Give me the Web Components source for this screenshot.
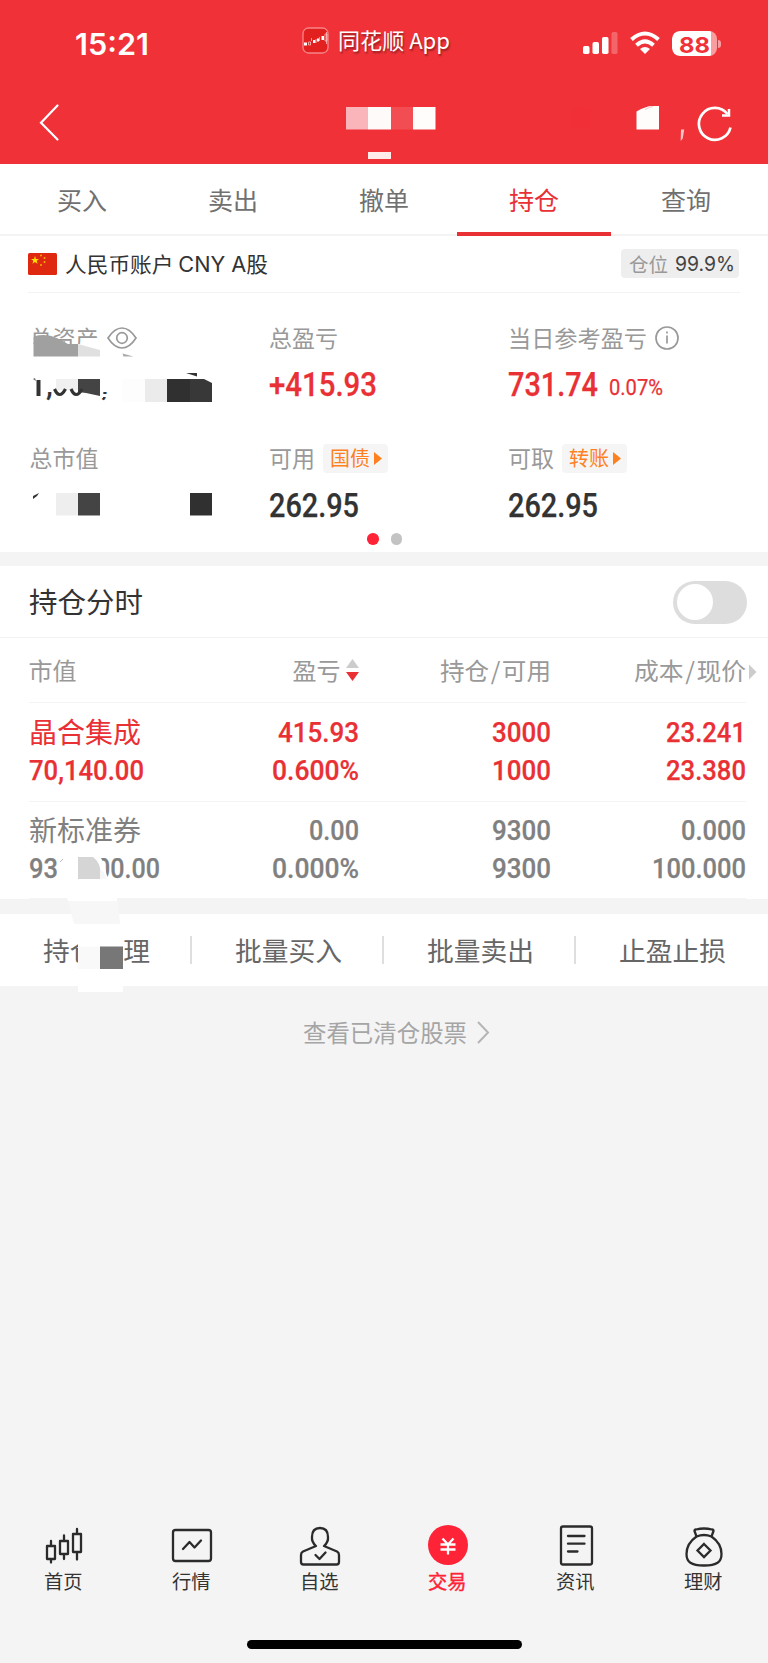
<!DOCTYPE html>
<html lang="zh-CN">
<head>
<meta charset="utf-8">
<title>持仓</title>
<style>
body{margin:0;background:#f4f4f4;font-family:"Noto Sans CJK SC",sans-serif}
</style>
</head>
<body>
<trade-page></trade-page>
<script>
const define=(name,css,html)=>customElements.define(name,class extends HTMLElement{
  constructor(){super();this.attachShadow({mode:'open'}).innerHTML=`<style>:host{display:block;box-sizing:border-box}*{box-sizing:border-box}svg{display:block;overflow:visible}${css}</style>${html}`;}
});

/* Single line of text condensed or stretched to a given width. */
customElements.define('fit-text',class extends HTMLElement{
  constructor(){super();this.attachShadow({mode:'open'}).innerHTML=`<style>
  :host{display:block;flex:none;white-space:nowrap;height:1.2em;line-height:1.2em}
  span{display:inline-block;transform-origin:0 50%;position:relative;top:var(--dy,-.01em)}
  :host([num]) span{font-family:Roboto,sans-serif;top:-.075em;-webkit-text-stroke:.25px currentColor}
  :host([latin]) span{font-family:Inter,sans-serif;top:-.03em}
  </style><span><slot></slot></span>`;}
  connectedCallback(){
    const s=this.shadowRoot.querySelector('span'),w=+this.getAttribute('w');
    this.style.fontSize=this.getAttribute('size')+'px';
    this.style.width=w+'px';
    s.style.transform=`scaleX(${w/s.getBoundingClientRect().width})`;
  }
});

define('status-bar',`:host{height:82px;display:flex;align-items:center;color:#fff;padding-left:75px}
 .time{font-weight:600;margin-top:4px}
 .app{display:flex;align-items:center;margin-left:153px;gap:9px;margin-top:-2px;--dy:-.05em;text-shadow:1px 2px 2px #0006}
 .sig{margin-left:133px;display:flex;gap:12px;margin-top:5px}
 .bat{width:50px;height:25px;display:flex;align-items:center;background:linear-gradient(90deg,#fff 39.5px,#f99da0 39.5px) 0 0/45px 25px no-repeat;border-radius:7px;padding-left:7px;color:#f03238;font-weight:700;clip-path:inset(0 5px 0 0 round 8px)}
 .wrap{display:flex;align-items:center}.nub{width:3px;height:8px;background:#f99da0;border-radius:0 3px 3px 0;margin-left:-4px}`,
 `<fit-text class="time" latin w="74" size="30">15:21</fit-text>
 <div class="app"><svg width="27" height="27" viewBox="0 0 27 27"><rect x="1" y="1" width="25" height="25" rx="5.5" fill="#e2201f" stroke="#f78488" stroke-width="1.3"/><path d="M2 15.500h3v3H2zM11 13h2.500v3H11zM15 11.500h2v3H15zM19.500 9h2.500v4H19.500z" fill="#fff"/><path d="M6.500 15h2v3h-2zM9.500 11v3M14 12v4M17.500 10v4M24.500 5v12M23 7h2v7h-2z" fill="none" stroke="#fbc0c0" stroke-width=".8"/></svg>
 <fit-text w="112" size="22">同花顺 App</fit-text></div>
 <div class="sig"><svg width="35" height="24" viewBox="0 0 35 24" fill="#fff"><rect y="15" width="6.500" height="8" rx="1.700"/><rect x="9.500" y="11" width="6.500" height="12" rx="1.700"/><rect x="19" y="6" width="6.500" height="17" rx="1.700"/><rect x="28.500" y="1" width="6" height="22" rx="1.700" opacity=".25"/></svg>
 <svg width="30" height="24" viewBox="0 0 30 24"><path d="M1.500 8.500Q15-3.500 28.500 8.500M6.500 14.300Q15 6.500 23.500 14.300" fill="none" stroke="#fff" stroke-width="4"/><path d="M10 18Q15 14 20 18L15 23z" fill="#fff"/></svg>
 <div class="wrap"><div class="bat"><fit-text latin w="31" size="22">88</fit-text></div><div class="nub"></div></div></div>`);

define('nav-header',`:host{height:81.500px;position:relative;display:flex;align-items:center;justify-content:space-between;padding:0 36px 0 39px}svg.mask{position:absolute;left:0;top:-82px}`,
 `<svg width="20" height="37" viewBox="0 0 20 37"><path d="M18.500 1.500L2 18.800l16.500 16.700" fill="none" stroke="#fff" stroke-width="2.200" stroke-linecap="round"/></svg>
 <svg width="36" height="36" viewBox="0 0 36 36" fill="none" stroke="#fff" stroke-width="2.700"><path d="M34.500 22.500A16 16 0 1 1 31.500 9"/><path d="M26 10.500h7V4" stroke-width="2.500"/></svg>
 <svg class="mask" width="768" height="164"><path fill="#f9b5b9" d="M346 107h22v22.500h-22z"/><path fill="#fffafa" d="M368 107h23v22.500h-23z"/><path fill="#f34d54" d="M391 107h22v22.500h-22z"/><path fill="#fffcfc" d="M413 107h22.500v22.500H413zM636.500 111.500Q646 106 652 106H659v23.500H636.500z"/><path fill="#ffebea" d="M368 152h23v7h-23z"/><path fill="#f03036" d="M571 107h20v22h-20z"/><path d="M645 109.500Q650 107 653 106.500" stroke="#fbc5c7" fill="none"/><path fill="#fbc5c7" d="M681 129.500h3.200l-1.500 9-2 2.500z"/></svg>`);

define('trade-tabs',`:host{height:72px;background:#fff;display:flex;padding:0 6.500px;border-bottom:2px solid #f3f3f3;color:#707070}
 div{width:151px;height:72px;display:flex;align-items:center;justify-content:center;padding-right:1px}.on{color:#e93034;width:154px;margin:0 -.500px 0 -2.500px;border-bottom:4.500px solid #e93034;padding-top:4.500px}`,
 `<div><fit-text w="50" size="24.5">买入</fit-text></div><div><fit-text w="50" size="24.5">卖出</fit-text></div><div><fit-text w="50" size="24.5">撤单</fit-text></div><div class="on"><fit-text w="50" size="24.5">持仓</fit-text></div><div><fit-text w="50" size="24.5">查询</fit-text></div>`);

define('account-row',`:host{height:57.500px;margin:0 28px;border-bottom:1px solid #f3f3f3;display:flex;align-items:center;color:#333}
 .t{margin-left:8px}.pos{margin-left:auto;width:118px;height:29px;margin-right:1px;border-radius:4px;background:#eee;display:flex;align-items:center;padding-left:7.500px;gap:7px;color:#999}.pos .n{color:#444}`,
 `<svg width="29" height="22" viewBox="0 0 29 22"><rect width="29" height="22" rx="1.500" fill="#de2910"/><path d="M7 3l1 3h3L8.700 7.800l.8 3L7 9 4.500 10.800l.8-3L3 6h3z" fill="#ffde00"/><g fill="#f5b000"><circle cx="13" cy="2.500" r="1"/><circle cx="16.500" cy="5" r="1"/><circle cx="16.500" cy="9" r="1"/><circle cx="13" cy="12" r="1"/></g></svg>
 <fit-text class="t" w="203" size="21">人民币账户 <span style="font-family:Inter">CNY A</span>股</fit-text>
 <div class="pos"><fit-text w="39" size="19.5">仓位</fit-text><fit-text class="n" latin w="60" size="20">99.9%</fit-text></div>`);

define('asset-metric',`.l{height:30px;display:flex;align-items:center;gap:8px;color:#999}.v{height:36px;margin-top:13px;display:flex;align-items:center;gap:11px;color:var(--c,#333);font-weight:500}`,
 `<div class="l"><slot name="label"></slot></div><div class="v"><slot></slot></div>`);

define('link-chip',`:host{width:64.500px;height:28.500px;background:#f5f5f5;border-radius:4px;display:flex;align-items:center;padding-left:7px;gap:3.500px;color:#ff801f}`,
 `<fit-text w="40" size="20"><slot></slot></fit-text><svg width="8" height="13"><path d="M0 0v13L8 6.500z" fill="#ff801f"/></svg>`);

define('asset-panel',`:host{height:258.500px;position:relative;padding:30px 0 0 29.500px}
 .g{display:grid;grid-template-columns:239.500px 239px 1fr;row-gap:41.500px}.red{--c:#e93034}
 .dots{display:flex;gap:12px;margin:10.500px 0 0 337.500px}.dots i{width:11.500px;height:11.500px;border-radius:50%;background:#c3c3c3}.dots i:first-child{background:#ff2337}
 .mask{position:absolute;left:0;top:-293px}`,
 `<div class="g">
 <asset-metric><fit-text slot="label" w="69" size="23">总资产</fit-text><svg slot="label" width="30" height="22" viewBox="0 0 30 22" fill="none" stroke="#999" stroke-width="1.700"><path d="M1 11Q7.500 1 15 1T29 11Q22.500 21 15 21T1 11z"/><circle cx="15" cy="11" r="5.300"/></svg><fit-text num w="78" size="33">1,000,</fit-text></asset-metric>
 <asset-metric class="red"><fit-text slot="label" w="69" size="23">总盈亏</fit-text><fit-text num w="108" size="32.5">+415.93</fit-text></asset-metric>
 <asset-metric class="red"><fit-text slot="label" w="139" size="23">当日参考盈亏</fit-text><svg slot="label" width="24" height="24" viewBox="0 0 24 24" fill="none" stroke="#999" stroke-width="1.700"><circle cx="12" cy="12" r="11"/><path d="M12 9.500v8M12 5.500v2"/></svg><fit-text num w="90" size="32.5">731.74</fit-text><fit-text num w="54" size="21.5" style="font-weight:400;margin-top:7px">0.07%</fit-text></asset-metric>
 <asset-metric><fit-text slot="label" w="69" size="23">总市值</fit-text></asset-metric>
 <asset-metric><fit-text slot="label" w="46" size="23">可用</fit-text><link-chip slot="label">国债</link-chip><fit-text num w="90" size="32.5">262.95</fit-text></asset-metric>
 <asset-metric><fit-text slot="label" w="46" size="23">可取</fit-text><link-chip slot="label">转账</link-chip><fit-text num w="90" size="32.5">262.95</fit-text></asset-metric>
 </div><div class="dots"><i></i><i></i></div>
 <svg class="mask" width="768" height="560"><path fill="#fff" d="M28 336h5.500v8H100v14H28z"/><path fill="#a0a0a0" d="M33.500 336.500Q46 333 57 338L68 344H78v12.500H33.500z"/><path fill="#e0e0e0" d="M78 344l22 6v6.500H78z"/><path fill="#aaa" d="M122.500 353.500l11 3h-10z"/>
 <path fill="#fff" d="M28 366h100v26H46v8H28z"/><path d="M36.500 380h4v16h-4z" fill="#333"/><path fill="#666" d="M33 379l2-1 1 3z"/><path fill="#f0f0f0" d="M56 379h22v11H56z"/><path fill="#fff" d="M53 390h50v8H53z"/><path fill="#444" d="M78 379h22v17l-14-3-8-1z"/><path d="M54.500 389q5 11 11 0M71 389q5 11 11 0" fill="none" stroke="#333" stroke-width="3.200"/>
 <path fill="#fff" d="M101 394h8v3h-8z"/><path fill="#fdfdfd" d="M122 379h23v23h-23z"/><path fill="#ebebeb" d="M145 379h22v23h-22z"/><path fill="#303030" d="M167 379h23v23h-23z"/><path fill="#383838" d="M190 379h14l8 4v19h-22z"/><path fill="#333" d="M186 373h11v3.500zM33 496l6-3-2 3-4 3z"/>
 <path fill="#eee" d="M56 493h22v22.500H56z"/><path fill="#444" d="M78 493h22v22.500H78z"/><path fill="#303030" d="M190 493h22v22.500h-22z"/></svg>`);

define('section-title',`:host{height:72px;border-bottom:1.500px solid #f3f3f3;display:flex;align-items:center;justify-content:space-between;padding:1px 21px 0 29px;color:#333}
 .sw{width:74px;height:43px;border-radius:22px;background:#ddd;padding:3.500px}.sw i{display:block;width:36px;height:36px;border-radius:50%;background:#fff}`,
 `<fit-text w="114" size="28">持仓分时</fit-text><div class="sw"><i></i></div>`);

define('holding-table',`:host{position:relative}
 .r{display:grid;grid-template-columns:150px 180px 192px 1fr;margin:0 22px 0 29px;border-bottom:1px solid #f4f4f4;height:98.500px;align-content:center;justify-items:end;row-gap:4px}
 .r>:nth-child(4n+1){justify-self:start}.h{height:65px;color:#999}.r fit-text{line-height:34px;height:34px}.p,.n{padding-bottom:1px}.p{color:#e93034;font-weight:500;--dy:-.03em}.n{color:#808080;font-weight:500;height:97.500px;--dy:-.03em}
 .p>[w="112"],.n>[w="112"]{font-weight:400}.a{display:flex;align-items:center;gap:5px}.h>*{position:relative;left:-.500px}.r>[w="58"]{margin-right:-.700px}
 .split{display:flex;gap:37.500px}.mask{position:absolute;left:0;top:-638px}.more{position:absolute;right:11px;top:26px}`,
 `<div class="r h"><fit-text w="48" size="24">市值</fit-text><div class="a"><fit-text w="48" size="24">盈亏</fit-text><svg width="13" height="24"><path d="M0 10L6.500 1 13 10z" fill="#ccc"/><path d="M0 14h13l-6.500 9z" fill="#e93034"/></svg></div><fit-text w="111" size="24">持仓&#8202;/&#8202;可用</fit-text><fit-text w="112" size="24">成本&#8202;/&#8202;现价</fit-text></div>
 <svg class="more" width="8" height="16"><path d="M0 .500L7.500 8 0 15.500z" fill="#ccc"/></svg>
 <div class="r p"><fit-text w="112" size="28">晶合集成</fit-text><fit-text num w="81" size="28.5">415.93</fit-text><fit-text num w="59" size="28.5">3000</fit-text><fit-text num w="80" size="28.5">23.241</fit-text>
 <fit-text num w="115" size="28.5">70,140.00</fit-text><fit-text num w="87" size="28.5">0.600%</fit-text><fit-text num w="59" size="28.5">1000</fit-text><fit-text num w="80" size="28.5">23.380</fit-text></div>
 <div class="r n"><fit-text w="112" size="28">新标准券</fit-text><fit-text num w="50" size="28.5">0.00</fit-text><fit-text num w="59" size="28.5">9300</fit-text><fit-text num w="65" size="28.5">0.000</fit-text>
 <div class="split"><fit-text num w="29" size="28.5">93</fit-text><fit-text num w="64" size="28.5">00.00</fit-text></div><fit-text num w="87" size="28.5">0.000%</fit-text><fit-text num w="59" size="28.5">9300</fit-text><fit-text num w="94" size="28.5">100.000</fit-text></div>
 <svg class="mask" width="768" height="1"><path fill="#fff" d="M65 854h31q6 4 8 10l3 12v5H65z"/><path fill="#d5d5d5" d="M78 857h15q6 5 7 11v11H78z"/><path fill="#f7f7f7" d="M100 868q4 4 7 11h-7z"/><path d="M60 862l3-3" stroke="#bbb"/></svg>`);

define('batch-bar',`:host{height:72px;background:#fff;display:flex;align-items:center;position:relative;color:#666;--dy:.02em}
 div{width:192px;height:28px;display:flex;align-items:center;justify-content:center;padding-left:2px;border-right:2px solid #dedede}div:last-of-type{border:0;padding-left:0}.mask{position:absolute;left:0;top:-914.500px}`,
 `<div><fit-text w="107" size="26.5">持仓管理</fit-text></div><div><fit-text w="107" size="26.5">批量买入</fit-text></div><div><fit-text w="107" size="26.5">批量卖出</fit-text></div><div><fit-text w="107" size="26.5">止盈止损</fit-text></div>
 <svg class="mask" width="768" height="1"><path fill="#fff" d="M67 899h50v10H71zM78 936h45v57H78z"/><path fill="#f7f7f7" d="M68 902h50l2 23H74z"/><path fill="#f9f9f9" d="M78 947.500h22v22.500H78z"/><path fill="#777" d="M100 947.500h23V970h-23z"/></svg>`);

define('cleared-link',`:host{height:92px;display:flex;align-items:center;justify-content:center;gap:10px;color:#a5a5a5;padding:2px 0 0 23px;--dy:0}`,
 `<fit-text w="164" size="23.5">查看已清仓股票</fit-text><svg width="12" height="23"><path d="M1 1l10 10.500L1 22" fill="none" stroke="#b5b5b5" stroke-width="2"/></svg>`);

define('tab-item',`:host{width:128px;display:flex;flex-direction:column;align-items:center;color:#333}::slotted(svg){display:block;overflow:visible}fit-text{margin-top:4px;position:relative;left:-.500px}:host([on]){color:#ff2337;-webkit-text-stroke:.4px #ff2337}`,
 `<slot name="icon"></slot><fit-text w="38.5" size="19"><slot></slot></fit-text>`);

define('bottom-tabs',`:host{height:140.500px;margin-top:auto}nav{display:flex;height:117.500px}.home{width:275px;height:9px;border-radius:5px;background:#000;margin:0 auto}tab-item svg{fill:none;stroke:#2b2b2b;stroke-width:2.300;stroke-linejoin:round;stroke-linecap:round}`,
 `<nav>
 <tab-item><svg slot="icon" width="42" height="44" viewBox="43 1522 42 44"><path d="M47 1545h8v13h-8zM51 1540v5M51 1558v3.500M60 1540h8v13h-8zM64 1534.500v5.500M64 1553v5M73 1533h8v18h-8zM77 1528v5M77 1551v7.500"/></svg>首页</tab-item>
 <tab-item><svg slot="icon" width="42" height="44" viewBox="171 1522 42 44"><rect x="173" y="1529" width="38" height="31" rx="2.500"/><path d="M183 1548l6.500-7 5 5.500 6.500-7"/></svg>行情</tab-item>
 <tab-item><svg slot="icon" width="42" height="44" viewBox="299 1522 42 44"><path d="M316 1545Q311.500 1541 312 1536 312 1527 320 1527T328 1536Q328.500 1541 324 1545L337 1550.500Q339 1551.500 339 1554V1561Q339 1563.500 336.500 1563.500H303.500Q301 1563.500 301 1561V1554Q301 1551.500 303 1550.500z"/><path d="M315.500 1554l4 4 6-6.500"/></svg>自选</tab-item>
 <tab-item on><svg slot="icon" width="42" height="44" viewBox="427 1522 42 44"><circle cx="448" cy="1544" r="20" style="fill:#ff2337;stroke:none"/><path style="stroke:#fff;stroke-width:2.300;stroke-linecap:butt" d="M442.500 1537.500l5.500 6 5.500-6M448 1543v10.500M440.500 1543.500h15M440.500 1548.500h15"/></svg>交易</tab-item>
 <tab-item><svg slot="icon" width="42" height="44" viewBox="555 1522 42 44"><rect x="561" y="1525.500" width="31" height="38" rx="2"/><path d="M568 1535h16.500M568 1542.700h16.500M568 1550.500h9.500"/></svg>资讯</tab-item>
 <tab-item><svg slot="icon" width="42" height="44" viewBox="683 1522 42 44"><path d="M696.500 1535.500L694.500 1530Q694.500 1528.500 696 1528.500 704 1526.500 712 1528.500 713.500 1528.500 713.500 1530L711.500 1535.500"/><path d="M696.500 1535.500Q704 1532.500 711.500 1535.500C718 1540 721.500 1547 721.500 1553 721.500 1561 717 1564.500 704 1564.500S686.500 1561 686.500 1553C686.500 1547 690 1540 696.500 1535.500z"/><path style="stroke-linejoin:miter" d="M704 1543l6.500 6.500-6.500 6.500-6.500-6.500z"/></svg>理财</tab-item>
 </nav><div class="home"></div>`);

define('trade-page',`:host{width:768px;height:1663px;display:flex;flex-direction:column;background:#f4f4f4;overflow:hidden}
 .top{background:#f03238;height:163.500px}.card{background:#fff}.gap{height:14.500px;flex:none}`,
 `<div class="top"><status-bar></status-bar><nav-header></nav-header></div>
 <trade-tabs></trade-tabs>
 <div class="card"><account-row></account-row><asset-panel></asset-panel></div><div class="gap"></div>
 <div class="card"><section-title></section-title><holding-table></holding-table></div><div class="gap"></div>
 <batch-bar></batch-bar><cleared-link></cleared-link><bottom-tabs></bottom-tabs>`);
</script>
</body>
</html>
